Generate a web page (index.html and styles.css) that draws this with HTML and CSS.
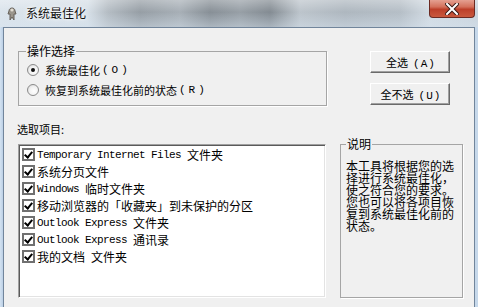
FILE: index.html
```html
<!DOCTYPE html>
<html lang="zh-CN">
<head>
    <meta charset="UTF-8">
    <title>系统最佳化</title>
    <link rel="stylesheet" href="styles.css">
</head>
<body>

    <div class="window">
        <div class="titlebar">
            <svg class="app-icon" width="14" height="16" viewBox="0 0 14 16">
                <path d="M4 6 C4 2 10 2 10 6 L11 9 L9 9 L9 15 L7 12 L5 15 L5 9 L3 9 Z" fill="#9a958c" stroke="#66615a" stroke-width="1"/>
                <circle cx="7" cy="5" r="1.6" fill="#e2ddd3"/>
            </svg>
            <span class="title">系统最佳化</span>
            <button class="close" aria-label="关闭">
                <svg width="14" height="12" viewBox="0 0 14 12">
                    <path d="M2 1 L12 11 M12 1 L2 11" stroke="#3b1a16" stroke-width="4" stroke-linecap="square"/>
                    <path d="M2 1 L12 11 M12 1 L2 11" stroke="#fff" stroke-width="2" stroke-linecap="square"/>
                </svg>
            </button>
        </div>

        <div class="client">
            <div class="top-row">
                <fieldset class="group options">
                    <legend>操作选择</legend>
                    <label class="radio-row"><span class="radio checked"></span>系统最佳化<span class="en">(O)</span></label>
                    <label class="radio-row"><span class="radio"></span>恢复到系统最佳化前的状态<span class="en">(R)</span></label>
                </fieldset>
                <div class="buttons">
                    <button class="btn">全选<span class="en">(A)</span></button>
                    <button class="btn">全不选<span class="en">(U)</span></button>
                </div>
            </div>

            <div class="list-label">选取项目:</div>

            <div class="bottom-row">
                <div class="listbox">
                    <div class="item"><span class="check"></span><span class="en">Temporary Internet Files </span>文件夹</div>
                    <div class="item"><span class="check"></span>系统分页文件</div>
                    <div class="item"><span class="check"></span><span class="en">Windows </span>临时文件夹</div>
                    <div class="item"><span class="check"></span>移动浏览器的「收藏夹」到未保护的分区</div>
                    <div class="item"><span class="check"></span><span class="en">Outlook Express </span>文件夹</div>
                    <div class="item"><span class="check"></span><span class="en">Outlook Express </span>通讯录</div>
                    <div class="item"><span class="check"></span>我的文档<span class="en"> </span>文件夹</div>
                </div>
                <fieldset class="group desc">
                    <legend>说明</legend>
                    <p>本工具将根据您的选择进行系统最佳化，使之符合您的要求。您也可以将各项目恢复到系统最佳化前的状态。</p>
                </fieldset>
            </div>
        </div>
    </div>

</body>
</html>
```

FILE: styles.css
```css
body {
    margin: 0;
    padding: 0;
    font-family: "Noto Sans CJK SC", sans-serif;
    font-size: 12px;
    color: #000;
    background-color: #c4d6e8;
}
.window {
    width: 478px;
    height: 307px;
    display: flex;
    flex-direction: column;
    overflow: hidden;
    background: linear-gradient(to right, #d3e2f1 0, #bcd0e6 3px, #c6d8ea 100%);
}
.titlebar {
    height: 27px;
    flex: none;
    display: flex;
    align-items: flex-start;
    padding-left: 5px;
    background:
        linear-gradient(to bottom, rgba(255, 255, 255, 0.3), rgba(255, 255, 255, 0) 45%, rgba(215, 228, 240, 0.45)),
        linear-gradient(to right, #dbe4ec 0, #d6dfe7 88px, #b4bcc3 108px, #969ea5 140px, #a7afb6 180px, #878f96 210px, #979fa6 240px, #838b92 270px, #bcc4cb 300px, #aeb7bf 345px, #b5bec6 400px, #d2dbe3 430px, #c9d3dc 100%);
}
.app-icon {
    margin-top: 5px;
    flex: none;
}
.title {
    margin-left: 7px;
    margin-top: 5px;
    line-height: 16px;
    font-size: 12px;
    color: #111;
    text-shadow: 0 0 6px #fff, 0 0 3px #fff;
}
.close {
    margin-left: auto;
    margin-right: 3px;
    width: 46px;
    height: 18px;
    padding: 0;
    border: 1px solid #6b2a22;
    border-top: none;
    border-radius: 0 0 4px 4px;
    background: linear-gradient(to bottom, #e5a091 0, #d4715c 40%, #bd3f29 55%, #c9583d 100%);
    display: flex;
    align-items: center;
    justify-content: center;
}
.client {
    flex: 1;
    margin: 0 3px;
    border: 1px solid #71859b;
    border-bottom: none;
    background-color: #f0f0f0;
}
.en {
    font-family: "Liberation Mono", monospace;
}

/* top section */
.top-row {
    display: flex;
    align-items: flex-start;
}
.group {
    margin: 0;
    border: 1px solid #a5a5a5;
    box-shadow: 1px 1px 0 #fff;
}
.group legend {
    padding: 0 1px;
    line-height: 14px;
    font-size: 12px;
}
.options {
    width: 309px;
    height: 62px;
    box-sizing: border-box;
    margin: 16px 0 0 14px;
    padding: 2px 4px 4px 7px;
}
.radio-row {
    display: flex;
    align-items: center;
    height: 20px;
    font-size: 11px;
}
.radio-row .en {
    font-size: 11px;
    margin-left: 2px;
    letter-spacing: 3px;
}
.radio {
    width: 10px;
    height: 10px;
    margin: 0 6px 0 1px;
    border: 1px solid #8a8a8a;
    border-radius: 50%;
    background: radial-gradient(circle at 60% 60%, #fff 0, #f2f2f2 50%, #cfcfcf 100%);
    display: flex;
    align-items: center;
    justify-content: center;
}
.radio.checked::after {
    content: "";
    width: 4px;
    height: 4px;
    border-radius: 50%;
    background-color: #111;
}
.buttons {
    display: flex;
    flex-direction: column;
    gap: 10px;
    margin: 23px 0 0 43px;
}
.btn {
    width: 80px;
    height: 22px;
    padding: 0 0 0 2px;
    font-family: "Noto Sans CJK SC", sans-serif;
    font-size: 11px;
    color: #000;
    background-color: #f0f0f0;
    border: 1px solid;
    border-color: #fff #6a6a6a #6a6a6a #fff;
    box-shadow: inset -1px -1px 0 #a0a0a0;
}
.btn .en {
    font-size: 11px;
    margin-left: 5px;
    letter-spacing: 1px;
}

/* list section */
.list-label {
    margin: 16px 0 0 13px;
    line-height: 14px;
    font-size: 11px;
}
.bottom-row {
    display: flex;
    align-items: flex-start;
    margin-top: 1px;
}
.listbox {
    width: 308px;
    height: 154px;
    box-sizing: border-box;
    margin: 7px 0 0 14px;
    background-color: #fff;
    border: 1px solid;
    border-color: #a0a0a0 #fff #fff #a0a0a0;
    box-shadow: inset 1px 1px 0 #5a5a5a, inset -1px -1px 0 #e3e3e3;
    padding: 1px 0 0 3px;
}
.item {
    display: flex;
    align-items: center;
    height: 17px;
    font-size: 12px;
    white-space: pre;
}
.item .en {
    font-size: 11px;
    letter-spacing: -0.6px;
    color: #000;
}
.check {
    width: 9px;
    height: 9px;
    flex: none;
    margin-right: 2px;
    border: 2px solid #707070;
    background: #fff;
    position: relative;
}
.check::after {
    content: "";
    position: absolute;
    left: 2px;
    top: 0;
    width: 3px;
    height: 6px;
    border: solid #000;
    border-width: 0 2px 2px 0;
    transform: rotate(40deg);
}
.desc {
    width: 123px;
    height: 161px;
    box-sizing: border-box;
    margin-left: 14px;
    padding: 9px 4px 0 5px;
}
.desc p {
    margin: 0;
    width: 108.5px;
    font-size: 12px;
    line-height: 12px;
    color: #000;
}
```
